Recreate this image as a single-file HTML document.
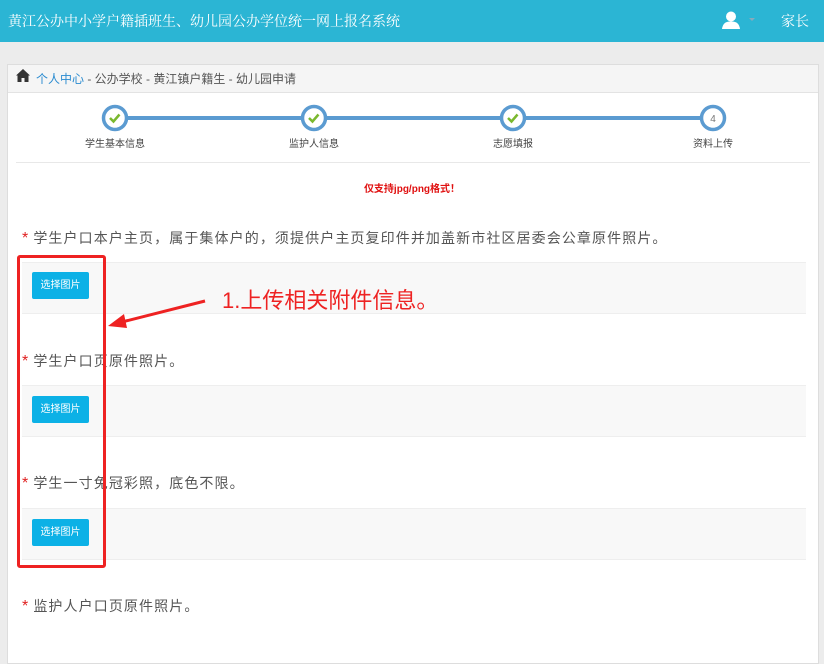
<!DOCTYPE html>
<html><head><meta charset="utf-8"><style>
*{margin:0;padding:0;box-sizing:border-box}
body{width:824px;height:623px;overflow:hidden;background:#ececec;font-family:"Liberation Sans","Noto Sans CJK SC",sans-serif;position:relative}
.hdr{position:absolute;left:0;top:0;width:824px;height:42px;background:#2bb5d4;color:#fff}
.abs{position:absolute}
.serif{font-family:"Liberation Serif","Noto Serif CJK SC",serif}
.card{position:absolute;left:7px;top:64px;width:812px;height:600px;background:#fff;border:1px solid #ddd}
.bc{position:absolute;left:0;top:0;width:810px;height:28px;background:#f5f5f5;border-bottom:1px solid #e3e3e3;font-size:12px;color:#555;line-height:28px;padding-left:28px}
.lab{position:absolute;left:22px;font-size:14px;color:#555;letter-spacing:1.1px;white-space:nowrap}
.lab b{color:#e02020;font-weight:normal;margin-right:4px;font-size:16px}
.box{position:absolute;left:22px;width:784px;height:52px;background:#f8f8f8;border-top:1px solid #eee;border-bottom:1px solid #eee}
.btn{position:absolute;left:32px;width:57px;height:27px;background:#0cb1e6;color:#fff;font-size:10px;line-height:27px;text-align:center;border-radius:2px}
.step{position:absolute;top:135px;font-size:10px;color:#444;transform:translateX(-50%)}
</style></head><body>
<div class="hdr">
<div class="abs serif" style="left:8px;top:11px;font-size:14px">黄江公办中小学户籍插班生、幼儿园公办学位统一网上报名系统</div>
<svg class="abs" style="left:721px;top:11px" width="20" height="18" viewBox="0 0 20 18"><circle cx="10" cy="5.5" r="5" fill="#fff"/><path d="M1 18 Q2 10 10 10.5 Q18 10 19 18Z" fill="#fff"/></svg>
<div class="abs" style="left:749px;top:18px;width:0;height:0;border-left:3px solid transparent;border-right:3px solid transparent;border-top:3px solid #8ab"></div>
<div class="abs serif" style="left:781px;top:11px;font-size:14px">家长</div>
</div>
<div class="card">
<div class="bc"><span style="color:#2a8bd0">个人中心</span> - 公办学校 - 黄江镇户籍生 - 幼儿园申请</div>
</div>
<svg class="abs" style="left:16px;top:69px" width="14" height="13" viewBox="0 0 14 13"><path d="M7 0 L0 6.5 L1.5 6.5 L1.5 13 L5.5 13 L5.5 9 L8.5 9 L8.5 13 L12.5 13 L12.5 6.5 L14 6.5 Z" fill="#333"/></svg>
<div class="abs" style="left:115px;top:116px;width:598px;height:4px;background:#5b9bd1"></div>
<svg class="abs" style="left:0;top:100px" width="824" height="40">
<g fill="#fff" stroke="#5b9bd1" stroke-width="3.5">
<circle cx="115" cy="18" r="11.5"/><circle cx="314" cy="18" r="11.5"/><circle cx="513" cy="18" r="11.5"/><circle cx="713" cy="18" r="11.5"/></g>
<g fill="none" stroke="#7ab82e" stroke-width="2.5"><path d="M110 18l3.5 3.5 6-7"/><path d="M309 18l3.5 3.5 6-7"/><path d="M508 18l3.5 3.5 6-7"/></g>
<text x="713" y="22" font-size="10" fill="#777" text-anchor="middle" font-family="Liberation Sans">4</text>
</svg>
<div class="step" style="left:115px">学生基本信息</div>
<div class="step" style="left:314px">监护人信息</div>
<div class="step" style="left:513px">志愿填报</div>
<div class="step" style="left:713px">资料上传</div>
<div class="abs" style="left:16px;top:162px;width:794px;height:1px;background:#e8e8e8"></div>
<div class="abs" style="left:0;width:824px;text-align:center;top:180px;font-size:10px;color:#e01010;font-weight:bold">仅支持jpg/png格式！</div>
<div class="lab" style="top:228px"><b>*</b>学生户口本户主页，属于集体户的，须提供户主页复印件并加盖新市社区居委会公章原件照片。</div>
<div class="box" style="top:262px"></div><div class="btn" style="top:272px">选择图片</div>
<div class="lab" style="top:351px"><b>*</b>学生户口页原件照片。</div>
<div class="box" style="top:385px"></div><div class="btn" style="top:396px">选择图片</div>
<div class="lab" style="top:473px"><b>*</b>学生一寸免冠彩照，底色不限。</div>
<div class="box" style="top:508px"></div><div class="btn" style="top:519px">选择图片</div>
<div class="lab" style="top:596px"><b>*</b>监护人户口页原件照片。</div>
<div class="abs" style="left:17px;top:255px;width:89px;height:313px;border:3px solid #ee2222;border-radius:3px"></div>
<svg class="abs" style="left:0;top:0" width="824" height="623"><path d="M205 301 L122 322" stroke="#ee2222" stroke-width="3"/><path d="M108 326 L124 314 L127 328Z" fill="#ee2222"/></svg>
<div class="abs" style="left:222px;top:283px;font-size:22px;color:#ee2222">1.上传相关附件信息。</div>
</body></html>
